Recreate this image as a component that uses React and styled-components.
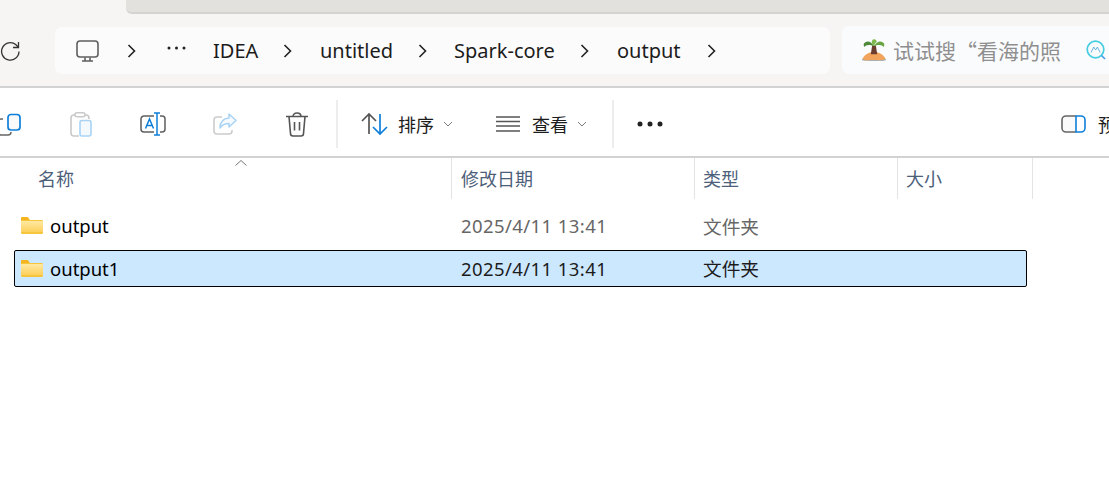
import styled, { createGlobalStyle } from "styled-components";

const GlobalStyle = createGlobalStyle`
  html, body {
    margin: 0;
    padding: 0;
    background: #fff;
    overflow: hidden;
  }
  body {
    font-family: "Noto Sans", "Noto Sans CJK SC", sans-serif;
  }
  svg {
    flex: none;
    display: block;
  }
`;

const Page = styled.div`
  width: 1109px;
  height: 484px;
  overflow: hidden;
  background: #fff;
  display: flex;
  flex-direction: column;
`;

const TitleStrip = styled.div`
  height: 14px;
  background: #f6f5f3;
  padding-left: 126px;
  flex: none;
`;

const ActiveTab = styled.div`
  height: 14px;
  background: #e2e1dd;
  border-bottom: 2px solid #d3d3cf;
  border-bottom-left-radius: 6px;
  box-sizing: border-box;
`;

const AddressBar = styled.div`
  height: 59px;
  flex: none;
  background: #f6f5f4;
  border-bottom: 2px solid #d2d2d2;
  display: flex;
  align-items: flex-start;
  padding-top: 13px;
`;

const Refresh = styled.div`
  width: 55px;
  flex: none;
  height: 47px;
  display: flex;
  align-items: center;
`;

const Crumbs = styled.div`
  width: 775px;
  height: 47px;
  flex: none;
  background: #fbfbfb;
  border-radius: 7px;
  display: flex;
  align-items: center;
  color: #1c1c1c;
  font-size: 20px;
`;

const Crumb = styled.span`
  flex: none;
  box-sizing: border-box;
  width: ${(p) => p.$w}px;
  padding-left: ${(p) => p.$pad || 0}px;
  white-space: nowrap;
  margin-top: -1px;
`;

const CrumbIcon = styled.span`
  flex: none;
  box-sizing: border-box;
  display: flex;
  width: ${(p) => p.$w}px;
  justify-content: ${(p) => p.$justify || "center"};
  padding-left: ${(p) => p.$pad || 0}px;
  padding-bottom: ${(p) => p.$bottom || 0}px;
`;

const SearchBox = styled.div`
  margin-left: 12px;
  width: 300px;
  height: 48px;
  margin-top: -1px;
  flex: none;
  background: #fafbfd;
  border-radius: 7px;
  display: flex;
  align-items: center;
  padding-left: 20px;
  box-sizing: border-box;
  color: #8f8f8f;
  gap: 7px;
`;

const SearchText = styled.span`
  width: 186px;
  white-space: nowrap;
  flex: none;
  margin-top: -1px;
  font-family: "Noto Sans CJK SC", sans-serif;
  font-size: 21px;
`;

const Toolbar = styled.div`
  height: 70px;
  box-sizing: border-box;
  padding-top: 4px;
  flex: none;
  display: flex;
  align-items: center;
  border-bottom: 2px solid #d2d2d2;
  color: #1c1c1c;
  font-size: 18px;
`;

const ToolButton = styled.div`
  width: 72px;
  flex: none;
  display: flex;
  justify-content: center;
  align-items: center;
  margin-left: ${(p) => p.$left || 0}px;
`;

const Divider = styled.div`
  width: 2px;
  height: 48px;
  background: #ededed;
  flex: none;
  margin-left: ${(p) => p.$left || 0}px;
`;

const MenuButton = styled.div`
  display: flex;
  align-items: center;
  flex: none;
  width: ${(p) => p.$w}px;
  margin-left: ${(p) => p.$left || 0}px;
`;

const MenuLabel = styled.span`
  margin-left: ${(p) => p.$left}px;
  width: 36px;
  white-space: nowrap;
  flex: none;
`;

const Chevron = styled.span`
  margin-left: 9px;
  display: flex;
`;

const HeaderRow = styled.div`
  height: 41px;
  flex: none;
  display: grid;
  grid-template-columns: 452px 243px 203px 135px;
  width: 1033px;
  position: relative;
  color: #4c607a;
  font-size: 18px;
`;

const HeaderCell = styled.div`
  border-right: 1px solid #e3e3e3;
  display: flex;
  align-items: center;
  padding-left: ${(p) => p.$pad}px;
  padding-bottom: 1px;
  box-sizing: border-box;
  white-space: nowrap;
`;

const SortCaret = styled.svg`
  position: absolute;
  left: 235px;
  top: 1px;
`;

const FileList = styled.div`
  padding: 8px 0 0 14px;
  width: 1013px;
`;

const FileRow = styled.div`
  height: ${(p) => (p.$selected ? 37 : 36)}px;
  width: 1013px;
  margin-top: ${(p) => p.$top || 0}px;
  box-sizing: border-box;
  display: grid;
  grid-template-columns: 437px 243px 1fr;
  align-items: center;
  font-size: 18.5px;
  border: 1px solid ${(p) => (p.$selected ? "#000" : "transparent")};
  border-radius: 2px;
  background: ${(p) => (p.$selected ? "#cce8ff" : "transparent")};
`;

const NameCell = styled.div`
  display: flex;
  align-items: center;
  color: #000;
  padding-left: 6px;
  gap: 7px;
`;

const DateCell = styled.div`
  color: ${(p) => (p.$selected ? "#1c1c1c" : "#666")};
  white-space: nowrap;
  padding-left: 9px;
  letter-spacing: 0.42px;
`;

const TypeCell = styled.div`
  color: ${(p) => (p.$selected ? "#1c1c1c" : "#666")};
  white-space: nowrap;
  padding-left: 8px;
  padding-bottom: ${(p) => (p.$selected ? 2 : 0)}px;
  font-size: 18.7px;
`;

const Arrow = () => (
  <svg width="10" height="14" viewBox="0 0 10 14" fill="none" stroke="#222" strokeWidth="1.6">
    <path d="M1.5 1l6 6-6 6" />
  </svg>
);

const SmallChevron = () => (
  <svg width="10" height="7" viewBox="0 0 10 7" fill="none" stroke="#7b7b7b" strokeWidth="1">
    <path d="M1 1l4 4 4-4" />
  </svg>
);

const Folder = () => (
  <svg width="22" height="17" viewBox="0 0 22 17">
    <defs>
      <linearGradient id="folderBody" x1="0" y1="0" x2="0" y2="1">
        <stop offset="0" stopColor="#fee9a2" />
        <stop offset="1" stopColor="#fdd05c" />
      </linearGradient>
    </defs>
    <path d="M0 1.2C0 .5.5 0 1.200 0h5c.4 0 .8.200 1 .500L8.800 3H0z" fill="#f5b51f" />
    <path d="M0 3h20.800c.7 0 1.200.500 1.200 1.200v11.600c0 .7-.5 1.200-1.200 1.200H1.200C.5 17 0 16.500 0 15.800z" fill="#f7c53c" />
    <path d="M0 4h21c.6 0 1 .4 1 1v10H0z" fill="url(#folderBody)" />
  </svg>
);

const App = () => (
  <Page>
    <GlobalStyle />
    <TitleStrip>
      <ActiveTab />
    </TitleStrip>
    <AddressBar>
      <Refresh>
        <svg width="20" height="20" viewBox="0 0 20 20" fill="none" stroke="#333" strokeWidth="1.3">
          <path d="M19 10.500A8.700 8.700 0 1 1 16 3.800L18.500 6.500" />
          <path d="M18.500 1V6.500H13" />
        </svg>
      </Refresh>
      <Crumbs>
        <CrumbIcon $w={65}>
          <svg width="23" height="22" viewBox="0 0 23 22" fill="none" stroke="#5f5f5f" strokeWidth="1.6">
            <rect x="1" y="1" width="21" height="16" rx="3" />
            <path d="M6 21h11M9 17.500V21M14 17.500V21" />
          </svg>
        </CrumbIcon>
        <CrumbIcon $w={24}>
          <Arrow />
        </CrumbIcon>
        <CrumbIcon $w={69} $justify="flex-start" $pad={23} $bottom={5}>
          <svg width="19" height="4" viewBox="0 0 19 4" fill="#222">
            <circle cx="2" cy="2" r="1.500" />
            <circle cx="9.500" cy="2" r="1.500" />
            <circle cx="17" cy="2" r="1.500" />
          </svg>
        </CrumbIcon>
        <Crumb $w={70}>IDEA</Crumb>
        <CrumbIcon $w={10}>
          <Arrow />
        </CrumbIcon>
        <Crumb $w={125} $pad={27}>untitled</Crumb>
        <CrumbIcon $w={10}>
          <Arrow />
        </CrumbIcon>
        <Crumb $w={152} $pad={26}>Spark-core</Crumb>
        <CrumbIcon $w={10}>
          <Arrow />
        </CrumbIcon>
        <Crumb $w={117} $pad={27}>output</Crumb>
        <CrumbIcon $w={10}>
          <Arrow />
        </CrumbIcon>
      </Crumbs>
      <SearchBox>
        <svg width="24" height="22" viewBox="0 0 26 24">
          <path d="M0 22.500C3 16 9 14 13 14s10 2 13 8.500c-1 .8-3 1.200-5 1.200H5c-2 0-4-.4-5-1.200z" fill="#f3a45c" />
          <path d="M0 22c4 1.600 22 1.600 26 0v1c-3 1-23 1-26 0z" fill="#5aa9e6" />
          <path d="M11 7h4l1.500 9.500h-7z" fill="#6b3d2e" />
          <path d="M13 8C10 2 5 1 2 5c-.6 1 0 3 .5 3.600C4 6.500 8 5.500 13 8z" fill="#4e8a3a" />
          <path d="M13 8c3-6 8-7 11-3 .6 1 0 3-.5 3.600C22 6.500 18 5.500 13 8z" fill="#6aa545" />
          <path d="M13 8c-3-3-3-6-1-7.500 2-.5 4 .5 4 2.500-1 1-2.500 2.500-3 5z" fill="#7fb84f" />
        </svg>
        <SearchText>试试搜“看海的照</SearchText>
        <svg width="20" height="20" viewBox="0 0 20 20" fill="none" stroke="#46cde0" strokeWidth="1.700">
          <circle cx="9.500" cy="9.500" r="8.300" />
          <path d="M15.500 15.500l3.500 3.500" stroke="#4b9fe8" />
          <path d="M5 12.500l2.800-5.500 1.800 3 1.800-3 2.800 5.500" strokeWidth="1" stroke="#6ab7dc" />
        </svg>
      </SearchBox>
    </AddressBar>
    <Toolbar>
      <ToolButton $left={-27}>
        <svg width="24" height="24" viewBox="0 0 24 24" fill="none">
          <path d="M6 7H4v0a3 3 0 0 0-3 3v10a3 3 0 0 0 3 3h7a3 3 0 0 0 3-3" stroke="#666" strokeWidth="1.500" />
          <rect x="11" y="2.500" width="12" height="15.500" rx="3" stroke="#0f7fd9" strokeWidth="1.700" fill="#fafafa" />
        </svg>
      </ToolButton>
      <ToolButton>
        <svg width="22" height="25" viewBox="0 0 22 25" fill="none">
          <path d="M5 3H4a3 3 0 0 0-3 3v15a3 3 0 0 0 3 3h5M15 3h1a3 3 0 0 1 3 3v1" stroke="#c9c9c9" strokeWidth="1.600" />
          <rect x="5" y="0.800" width="10" height="4" rx="2" stroke="#c9c9c9" strokeWidth="1.500" />
          <rect x="10" y="8.500" width="11" height="15.500" rx="2" stroke="#a8d3f4" strokeWidth="1.600" fill="#f4f9fd" />
        </svg>
      </ToolButton>
      <ToolButton>
        <svg width="26" height="24" viewBox="0 0 26 24" fill="none">
          <path d="M14 4H4a3 3 0 0 0-3 3v10a3 3 0 0 0 3 3h10M20 4h2a3 3 0 0 1 3 3v10a3 3 0 0 1-3 3h-2" stroke="#5f5f5f" strokeWidth="1.500" />
          <path d="M5.500 16.500L9.500 7l4 9.500M7 13.500h5" stroke="#0f7fd9" strokeWidth="1.500" />
          <path d="M17 1v22M14 1h6M14 23h6" stroke="#0f7fd9" strokeWidth="1.500" />
        </svg>
      </ToolButton>
      <ToolButton>
        <svg width="24" height="24" viewBox="0 0 24 24" fill="none">
          <path d="M9 5H4a3 3 0 0 0-3 3v11a3 3 0 0 0 3 3h12a3 3 0 0 0 3-3v-1" stroke="#cccccc" strokeWidth="1.600" />
          <path d="M16 2l7 6.500-7 6.500v-3.500c-4 0-7 1.500-9 4.500 0-6 3.500-9.500 9-10z" stroke="#a8d3f4" strokeWidth="1.500" strokeLinejoin="round" fill="#f8fbfe" />
        </svg>
      </ToolButton>
      <ToolButton>
        <svg width="22" height="25" viewBox="0 0 22 25" fill="none" stroke="#555" strokeWidth="1.600">
          <path d="M0 4.500h22M7 4.500C7 2.500 8.500 1 11 1s4 1.500 4 3.500M3 4.500l1.500 17a2.500 2.500 0 0 0 2.500 2.500h8a2.500 2.500 0 0 0 2.500-2.500L19 4.500M8.500 10v8.500M13.500 10v8.500" />
        </svg>
      </ToolButton>
      <Divider $left={3} />
      <MenuButton $w={135} $left={23}>
        <svg width="27" height="24" viewBox="0 0 27 24" fill="none" strokeWidth="1.700">
          <path d="M8 22V2M1 9l7-7 7 7" stroke="#555" />
          <path d="M19 2v20M12 15l7 7 7-7" stroke="#0f7fd9" />
        </svg>
        <MenuLabel $left={10}>排序</MenuLabel>
        <Chevron>
          <SmallChevron />
        </Chevron>
      </MenuButton>
      <MenuButton $w={116}>
        <svg width="24" height="16" viewBox="0 0 24 16" fill="none" stroke="#555" strokeWidth="1.300">
          <path d="M0 1h24M0 5.500h24M0 10h24M0 15h24" />
        </svg>
        <MenuLabel $left={12}>查看</MenuLabel>
        <Chevron>
          <SmallChevron />
        </Chevron>
      </MenuButton>
      <Divider />
      <MenuButton $w={424} $left={23}>
        <svg width="26" height="6" viewBox="0 0 26 6" fill="#222">
          <circle cx="3" cy="3" r="2.500" />
          <circle cx="13" cy="3" r="2.500" />
          <circle cx="23" cy="3" r="2.500" />
        </svg>
      </MenuButton>
      <MenuButton $w={60}>
        <svg width="25" height="18" viewBox="0 0 25 18" fill="none">
          <path d="M15 1H5a4 4 0 0 0-4 4v8a4 4 0 0 0 4 4h10" stroke="#666" strokeWidth="1.600" fill="#fafafa" />
          <path d="M15 1h5a4 4 0 0 1 4 4v8a4 4 0 0 1-4 4h-5z" stroke="#0f7fd9" strokeWidth="1.600" fill="#fff" />
        </svg>
        <MenuLabel $left={12}>预</MenuLabel>
      </MenuButton>
    </Toolbar>
    <HeaderRow>
      <SortCaret width="12" height="8" viewBox="0 0 12 8" fill="none" stroke="#777" strokeWidth="1">
        <path d="M.5 6.500l5.500-5 5.500 5" />
      </SortCaret>
      <HeaderCell $pad={38}>名称</HeaderCell>
      <HeaderCell $pad={9}>修改日期</HeaderCell>
      <HeaderCell $pad={8}>类型</HeaderCell>
      <HeaderCell $pad={8}>大小</HeaderCell>
    </HeaderRow>
    <FileList>
      <FileRow>
        <NameCell>
          <Folder />
          output
        </NameCell>
        <DateCell>2025/4/11 13:41</DateCell>
        <TypeCell>文件夹</TypeCell>
      </FileRow>
      <FileRow $selected $top={7}>
        <NameCell>
          <Folder />
          output1
        </NameCell>
        <DateCell $selected>2025/4/11 13:41</DateCell>
        <TypeCell $selected>文件夹</TypeCell>
      </FileRow>
    </FileList>
  </Page>
);

export default App;
